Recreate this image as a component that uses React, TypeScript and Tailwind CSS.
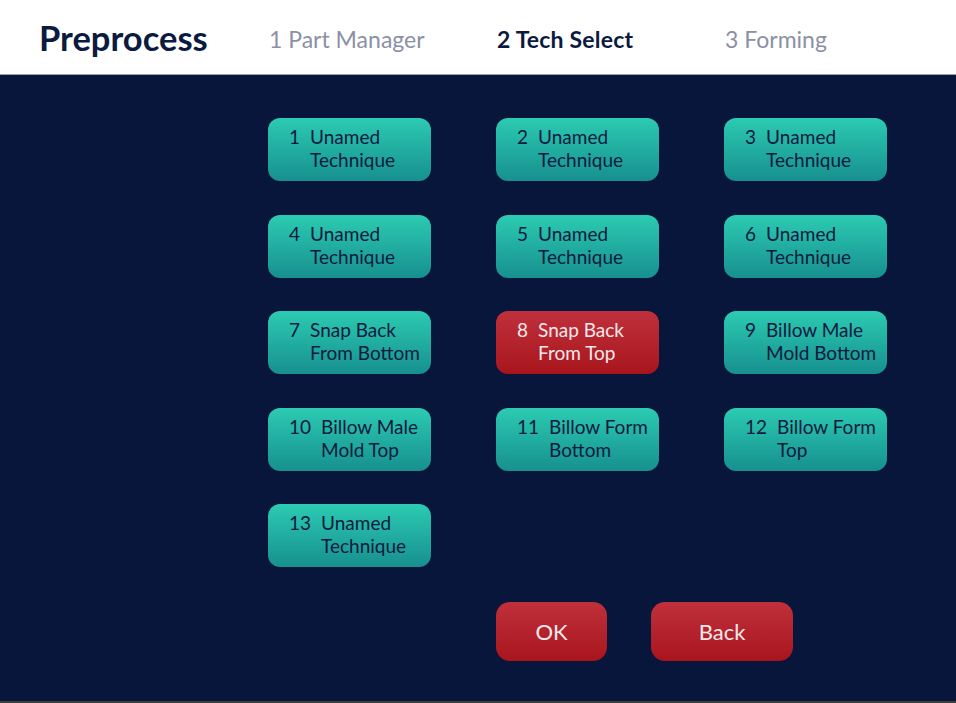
import React from "react";

const techs: { n: number; a: string; b: string; active?: boolean }[] = [
  { n: 1, a: "Unamed", b: "Technique" },
  { n: 2, a: "Unamed", b: "Technique" },
  { n: 3, a: "Unamed", b: "Technique" },
  { n: 4, a: "Unamed", b: "Technique" },
  { n: 5, a: "Unamed", b: "Technique" },
  { n: 6, a: "Unamed", b: "Technique" },
  { n: 7, a: "Snap Back", b: "From Bottom" },
  { n: 8, a: "Snap Back", b: "From Top", active: true },
  { n: 9, a: "Billow Male", b: "Mold Bottom" },
  { n: 10, a: "Billow Male", b: "Mold Top" },
  { n: 11, a: "Billow Form", b: "Bottom" },
  { n: 12, a: "Billow Form", b: "Top" },
  { n: 13, a: "Unamed", b: "Technique" },
];

export default function App() {
  return (
    <div
      className="w-[956px] h-[703px] flex flex-col bg-[#08163b] overflow-hidden"
      style={{ fontFamily: "Lato, 'Open Sans', sans-serif" }}
    >
      <header className="h-[75px] shrink-0 bg-white border-b border-[#9a9cb8] flex items-center">
        <div className="w-[268px] pl-[39px] pt-[2px] text-[34.5px] font-bold text-[#0b1a40] leading-none">
          Preprocess
        </div>
        <div className="grid grid-cols-[228px_228px_228px] text-[23px] leading-none pt-[4px]">
          <span className="text-[#8b90a6] pl-[1px]">1 Part Manager</span>
          <span className="text-[#0b1a40] font-bold pl-[1px] tracking-[0.2px]">2 Tech Select</span>
          <span className="text-[#8b90a6] pl-[1px]">3 Forming</span>
        </div>
      </header>
      <main className="flex-1 flex flex-col pl-[268px] pt-[43px]">
        <div className="grid grid-cols-[163px_163px_163px] gap-x-[65px] gap-y-[33.5px]">
          {techs.map((t) => (
            <button
              key={t.n}
              className={
                t.active
                  ? "h-[63px] rounded-[12px] bg-gradient-to-b from-[#c0303c] to-[#a8141c] text-[#f7e9ec] flex items-center pl-[21px] pb-[3px] text-[19px] leading-[23px] text-left"
                  : "h-[63px] rounded-[12px] bg-gradient-to-b from-[#2ccbb2] to-[#17908f] text-[#0b1a40] flex items-center pl-[21px] pb-[3px] text-[19px] leading-[23px] text-left"
              }
            >
              <span className="flex items-start">
                <span className="pr-[10px]">{t.n}</span>
                <span className="flex flex-col">
                  <span>{t.a}</span>
                  <span>{t.b}</span>
                </span>
              </span>
            </button>
          ))}
        </div>
        <div className="flex gap-[44px] pl-[228px] mt-[35px]">
          <button className="w-[111px] h-[59px] rounded-[14px] bg-gradient-to-b from-[#c0303c] to-[#a8141c] text-[#f7e9ec] text-[22px] flex items-center justify-center">
            OK
          </button>
          <button className="w-[142px] h-[59px] rounded-[14px] bg-gradient-to-b from-[#c0303c] to-[#a8141c] text-[#f7e9ec] text-[22px] flex items-center justify-center">
            Back
          </button>
        </div>
      </main>
      <div className="h-[2px] shrink-0 bg-[#3d3f3a]" />
    </div>
  );
}
